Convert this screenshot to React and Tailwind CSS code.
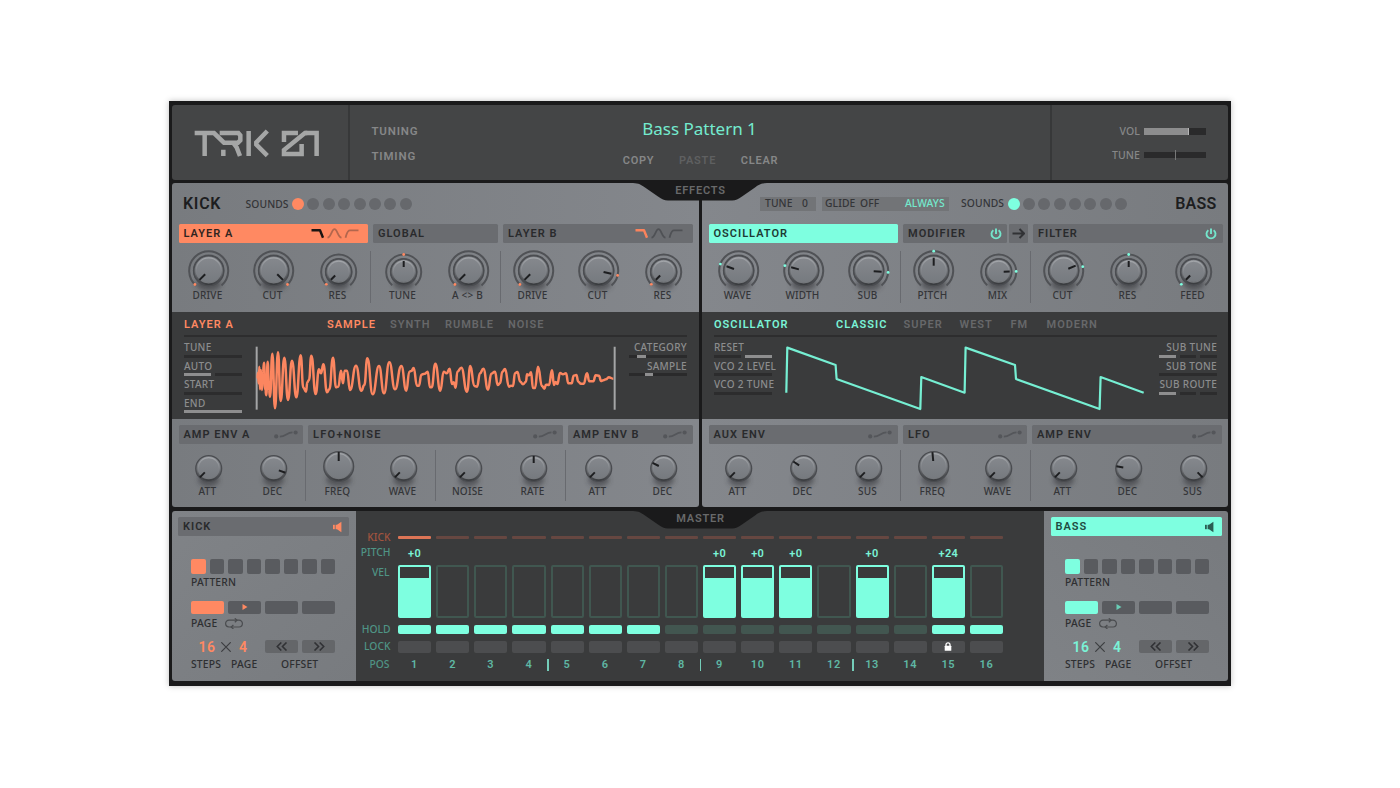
import React from "react";
import clsx from "clsx";

const DIN = "font-['Roboto',sans-serif] font-semibold";
const SANS = "font-['Noto_Sans',sans-serif] font-medium";

const KICK_TOP = [
  { label: "DRIVE", angle: -135, big: true },
  { label: "CUT", angle: 135, big: true },
  { label: "RES", angle: -135 },
  { label: "TUNE", angle: 0, line: true },
  { label: "A <> B", angle: -135, big: true },
  { label: "DRIVE", angle: -135, big: true, line: true },
  { label: "CUT", angle: 104, big: true },
  { label: "RES", angle: -135 },
];

const BASS_TOP = [
  { label: "WAVE", angle: -70, big: true },
  { label: "WIDTH", angle: -75, big: true },
  { label: "SUB", angle: 95, big: true },
  { label: "PITCH", angle: 0, big: true, line: true },
  { label: "MIX", angle: 88 },
  { label: "CUT", angle: 67, dot: 78, big: true, line: true },
  { label: "RES", angle: 0 },
  { label: "FEED", angle: -135 },
];

const KICK_BOTTOM = [
  { label: "ATT", angle: -135 },
  { label: "DEC", angle: 110 },
  { label: "FREQ", angle: 0, big: true, line: true },
  { label: "WAVE", angle: -135 },
  { label: "NOISE", angle: -135, line: true },
  { label: "RATE", angle: 0 },
  { label: "ATT", angle: -135, line: true },
  { label: "DEC", angle: -63 },
];

const BASS_BOTTOM = [
  { label: "ATT", angle: -135 },
  { label: "DEC", angle: -56 },
  { label: "SUS", angle: -135 },
  { label: "FREQ", angle: -5, big: true, line: true },
  { label: "WAVE", angle: -135 },
  { label: "ATT", angle: -135, line: true },
  { label: "DEC", angle: -80 },
  { label: "SUS", angle: 135 },
];

// sample wave form, in thirds of a pixel
const WAVE = [
  [22, 118], [24, 98], [26, 130], [28, 80], [30, 148], [33, 90], [36, 150], [39, 98], [42, 68],
  [46, 150], [49, 166], [53, 65], [57, 150], [60, 170], [67, 41], [75, 205], [84, 37], [92, 183],
  [103, 53], [114, 180], [126, 62], [139, 172], [152, 46], [160, 143], [168, 155], [172, 127],
  [177, 120], [184, 47], [197, 162], [207, 88], [213, 100], [220, 73], [231, 157], [238, 148],
  [249, 53], [258, 142], [265, 140], [273, 92], [279, 130], [284, 92], [291, 92], [300, 150],
  [318, 77], [334, 152], [343, 135], [352, 55], [368, 163], [387, 78], [402, 160], [418, 67],
  [435, 148], [454, 78], [469, 152], [478, 95], [484, 93], [491, 84], [501, 137], [507, 137],
  [514, 104], [524, 101], [533, 95], [540, 142], [545, 142], [556, 71], [571, 152], [581, 95],
  [590, 100], [599, 86], [606, 132], [611, 127], [617, 143], [622, 95], [634, 83], [651, 155],
  [661, 78], [673, 138], [681, 140], [690, 100], [700, 86], [714, 149], [724, 101], [735, 95],
  [743, 135], [750, 130], [757, 95], [765, 87], [777, 140], [783, 137], [789, 138], [795, 100],
  [802, 96], [811, 125], [819, 133], [828, 125], [831, 103], [837, 106], [843, 97], [849, 144],
  [855, 144], [864, 80], [876, 138], [883, 146], [888, 134], [897, 135], [906, 91], [912, 135],
  [917, 126], [922, 132], [930, 99], [939, 103], [948, 100], [955, 130], [965, 130], [971, 107],
  [979, 105], [985, 125], [992, 131], [1001, 131], [1011, 100], [1018, 124], [1030, 124],
  [1037, 106], [1047, 107], [1053, 123], [1060, 121], [1068, 118], [1076, 112], [1090, 116],
];

function wavePath(points) {
  let d = `M${points[0][0]} ${points[0][1]}`;
  for (let i = 1; i < points.length; i++) {
    const [x0, y0] = points[i - 1];
    const [x1, y1] = points[i];
    const mid = (x0 + x1) / 2;
    d += `C${mid} ${y0} ${mid} ${y1} ${x1} ${y1}`;
  }
  return d;
}

function polar(cx, cy, r, deg) {
  const a = ((deg - 90) * Math.PI) / 180;
  return [cx + r * Math.cos(a), cy + r * Math.sin(a)];
}

function Knob({ label, angle, dot, big, line, ring, color }) {
  const cx = 32.7;
  const cy = ring ? (big ? 27.7 : 29) : big ? 22.5 : 24.5;
  const r = big ? 15.5 : 13.5;
  const ringR = big ? 19.5 : 17.5;
  const [ax, ay] = polar(cx, cy, ringR, -139);
  const [bx, by] = polar(cx, cy, ringR, 139);
  const [px, py] = polar(cx, cy, ring ? 5 : 5.5, angle);
  const [qx, qy] = polar(cx, cy, ring ? r - 2.5 : r - 1, angle);
  const [dx, dy] = polar(cx, cy, ringR, dot ?? angle);

  return (
    <div className="relative w-[65px] shrink-0">
      {line && (
        <div
          className={clsx(
            "absolute left-[-0.5px] w-px bg-[#686a6f]",
            ring ? "top-[8px] h-[52px]" : "top-[6px] h-[51px]"
          )}
        />
      )}
      <svg width="65" height={ring ? 47 : 42} className="block overflow-visible">
        <ellipse cx={cx} cy={cy + r - 2} rx={r - 3} ry="6.5" fill="#2b2c2e" opacity="0.5" filter="url(#soft)" />
        {ring && (
          <>
            <path
              d={`M${ax} ${ay}A${ringR} ${ringR} 0 1 1 ${bx} ${by}`}
              fill="none"
              stroke="#505256"
              strokeWidth="2"
            />
            <circle cx={cx} cy={cy - 0.3} r={r + 0.3} fill="#4f5155" />
          </>
        )}
        <circle cx={cx} cy={cy} r={r - 0.6} fill="url(#rim)" stroke="#4a4c50" strokeWidth="1.4" />
        <circle cx={cx} cy={cy - 0.4} r={r - 3} fill="url(#face)" stroke="url(#edge)" strokeWidth="1.2" />
        <line x1={px} y1={py} x2={qx} y2={qy} stroke="#1d1e20" strokeWidth="2" />
        {ring && <circle cx={dx} cy={dy} r="1.4" fill={color} />}
      </svg>
      <div
        className={clsx(
          SANS,
          "-mt-px -ml-px text-center text-[10px] leading-[12px] tracking-[0.2px] text-[#343538]"
        )}
      >
        {label}
      </div>
    </div>
  );
}

function FilterIcons({ first, rest }) {
  return (
    <svg width="48" height="11" viewBox="0 0 48 11" fill="none" strokeWidth="1.8" strokeLinejoin="round">
      <path d="M0.5 2.3H9L12 9.8" stroke={first} strokeWidth="2.4" />
      <path d="M16.5 9.7C20 9.3 20.7 1.2 23.5 1.2S27 9.3 30.5 9.7" stroke={rest} />
      <path d="M34.5 9.8C35.8 6 36 2.3 39 2.3H47.5" stroke={rest} />
    </svg>
  );
}

function EnvIcon() {
  return (
    <svg width="24" height="9" viewBox="0 0 24 9" fill="none">
      <circle cx="2.2" cy="6.4" r="2.1" fill="#54565a" />
      <path d="M5.8 6.6C12 6.6 12.5 2.6 18.5 2.4" stroke="#54565a" strokeWidth="1.7" />
      <circle cx="21.6" cy="2.5" r="2.1" fill="#54565a" />
    </svg>
  );
}

function PowerIcon() {
  return (
    <svg width="12" height="12" viewBox="0 0 12 12" fill="none" stroke="#74e6cc" strokeWidth="1.9">
      <path d="M3.4 2.2A4.5 4.5 0 1 0 8.6 2.2" />
      <path d="M6 0.6V6" />
    </svg>
  );
}

function Tab({ children, className, icon }) {
  return (
    <div className={clsx("flex h-[19px] shrink-0 items-center justify-between rounded-[1.5px] pl-[5px]", className)}>
      <span className={clsx(DIN, "text-[11px] leading-none tracking-[1px]")}>{children}</span>
      {icon}
    </div>
  );
}

const IDLE = "bg-[#6a6c70] text-[#292a2c]";

function Dots({ color }) {
  return (
    <div className="flex gap-[3.4px]">
      {Array.from({ length: 8 }, (_, i) => (
        <span key={i} className={clsx("size-3 rounded-full", i === 0 ? color : "bg-[#66686c]")} />
      ))}
    </div>
  );
}

// segs is a list of lit flags, or a slider offset
function Param({ label, segs, right }) {
  return (
    <div className="h-[18.6px] w-[58px]">
      <div
        className={clsx(
          SANS,
          "flex h-[13px] items-center pb-[2px] whitespace-nowrap text-[10px] leading-none tracking-[0.3px] text-[#8c8d8e]",
          right && "justify-end"
        )}
      >
        {label}
      </div>
      {segs.slider !== undefined ? (
        <div className="h-[3px] bg-[#2a2a2b]">
          <div className="h-full w-[8.5px] bg-[#8e8e8f]" style={{ marginLeft: segs.slider }} />
        </div>
      ) : (
        <div className="flex gap-1">
          {segs.map((lit, i) => (
            <div key={i} className={clsx("h-[3px] flex-1", lit ? "bg-[#8e8e8f]" : "bg-[#2c2c2d]")} />
          ))}
        </div>
      )}
    </div>
  );
}

function ModeRow({ title, titleWidth, modes, color }) {
  return (
    <div className={clsx(DIN, "flex h-[25px] items-center border-b-2 border-[#2d2d2e] pt-px text-[11px] leading-none tracking-[1px]")}>
      <span className={clsx(titleWidth, color)}>{title}</span>
      {modes.map(([name, width], i) => (
        <span key={name} className={clsx(i === 0 ? color : "text-[#67686a]")} style={{ width }}>
          {name}
        </span>
      ))}
    </div>
  );
}

function Synth({ children, className }) {
  return <section className={clsx("flex h-[324px] flex-col overflow-hidden rounded-[3px]", className)}>{children}</section>;
}

function KnobRow({ knobs, ring, color }) {
  return (
    <div className={clsx("flex pl-[3.5px]", ring ? "h-[69px]" : "h-[63px]")}>
      {knobs.map((k, i) => (
        <Knob key={i} {...k} ring={ring} color={color} />
      ))}
    </div>
  );
}

function KickSynth() {
  return (
    <Synth className="w-[527px] bg-linear-to-r from-[#787b7f] to-[#84878c]">
      <div className="flex h-[41px] items-center pl-[11px]">
        <span className={clsx(DIN, "w-[62.5px] pt-px text-[16px] leading-none tracking-[0.7px] text-[#1d1e20]")}>KICK</span>
        <span className={clsx(SANS, "w-[46.5px] pt-px text-[10.3px] leading-none tracking-[0.1px] text-[#343538]")}>SOUNDS</span>
        <Dots color="bg-[#ff8962]" />
      </div>
      <div className="flex gap-[5px] pl-[6.5px]">
        <Tab className="w-[189.5px] bg-[#ff8962] pr-[9px] text-[#31241f]" icon={<FilterIcons first="#1b1512" rest="#b3664d" />}>
          LAYER A
        </Tab>
        <Tab className={clsx(IDLE, "w-[125px]")}>GLOBAL</Tab>
        <Tab className={clsx(IDLE, "w-[189.5px] pr-[10px]")} icon={<FilterIcons first="#fb835c" rest="#4f5155" />}>
          LAYER B
        </Tab>
      </div>
      <KnobRow knobs={KICK_TOP} ring color="#ff8962" />
      <div className="h-[107px] bg-[#3a3b3c] pl-3">
        <div className="w-[503px]">
          <ModeRow
            title="LAYER A"
            titleWidth="w-[143px]"
            color="text-[#ff8962]"
            modes={[["SAMPLE", 63], ["SYNTH", 55], ["RUMBLE", 63], ["NOISE", 50]]}
          />
          <div className="flex justify-between pt-1">
            <div className="w-[58px] pt-[0.5px]">
              <Param label="TUNE" segs={[0]} />
              <Param label="AUTO" segs={[1, 0]} />
              <Param label="START" segs={[0]} />
              <Param label="END" segs={[1]} />
            </div>
            <svg width="361" height="75" viewBox="15 0 1083 225" className="-mt-px mr-[1px]">
              <path d="M20 20V209" stroke="#a4a5a6" strokeWidth="6" />
              <path d={wavePath(WAVE)} fill="none" stroke="#fc8660" strokeWidth="7.5" strokeLinejoin="round" />
              <path d="M1094 20V209" stroke="#a4a5a6" strokeWidth="6" />
            </svg>
            <div className="w-[58px] pt-[0.5px]">
              <Param label="CATEGORY" segs={{ slider: 8 }} right />
              <Param label="SAMPLE" segs={{ slider: 15.5 }} right />
            </div>
          </div>
        </div>
      </div>
      <div className="flex gap-[5px] pt-[6px] pl-[6.5px]">
        <Tab className={clsx(IDLE, "w-[124.5px] pr-[5.5px]")} icon={<EnvIcon />}>AMP ENV A</Tab>
        <Tab className={clsx(IDLE, "w-[255px] pr-[6px]")} icon={<EnvIcon />}>
          <span className="tracking-[1.3px]">LFO+NOISE</span>
        </Tab>
        <Tab className={clsx(IDLE, "w-[124.5px] pr-[6px]")} icon={<EnvIcon />}>AMP ENV B</Tab>
      </div>
      <KnobRow knobs={KICK_BOTTOM} />
    </Synth>
  );
}

function BassSynth() {
  return (
    <Synth className="w-[526px] bg-linear-to-l from-[#787b7f] to-[#84878c]">
      <div className={clsx(SANS, "flex h-[41px] items-center pl-[58px] text-[10.3px] leading-none tracking-[0.1px] text-[#343538]")}>
        <div className="flex h-[14px] w-[56px] items-center justify-between bg-[#727477] px-[5px] pr-2">
          <span>TUNE</span>
          <span>0</span>
        </div>
        <div className="ml-[6px] flex h-[14px] w-[127px] items-center bg-[#727477] pl-[3px]">
          <span className="w-[35px] shrink-0">GLIDE</span>
          <span className="w-[45px] shrink-0">OFF</span>
          <span className="text-[#74e8cd]">ALWAYS</span>
        </div>
        <span className="ml-3 w-[46.5px]">SOUNDS</span>
        <Dots color="bg-[#7effe0]" />
        <span className={clsx(DIN, "ml-[48px] pt-px text-[16px] tracking-[0.2px] text-[#1d1e20]")}>BASS</span>
      </div>
      <div className="flex pl-[6.5px]">
        <Tab className="mr-[5px] w-[189.5px] bg-[#7effe0] text-[#1d3a34]">OSCILLATOR</Tab>
        <Tab className={clsx(IDLE, "mr-[2px] w-[104px] pr-[5px]")} icon={<PowerIcon />}>MODIFIER</Tab>
        <div className={clsx(IDLE, "mr-[5px] grid w-[19px] place-items-center rounded-[1px]")}>
          <svg width="13" height="11" viewBox="0 0 13 11" fill="none" stroke="#313235" strokeWidth="2">
            <path d="M0.5 5.5H11.5M7.5 1L12 5.5L7.5 10" />
          </svg>
        </div>
        <Tab className={clsx(IDLE, "w-[189.5px] pr-[5.5px]")} icon={<PowerIcon />}>FILTER</Tab>
      </div>
      <KnobRow knobs={BASS_TOP} ring color="#7effe0" />
      <div className="h-[107px] bg-[#3a3b3c] pl-3">
        <div className="w-[503px]">
          <ModeRow
            title="OSCILLATOR"
            titleWidth="w-[122px]"
            color="text-[#7af3d7]"
            modes={[["CLASSIC", 67.5], ["SUPER", 56], ["WEST", 51], ["FM", 36], ["MODERN", 60]]}
          />
          <div className="flex pt-1">
            <div className="w-[58px] pt-[0.5px]">
              <Param label="RESET" segs={[0, 1]} />
              <Param label="VCO 2 LEVEL" segs={[0]} />
              <Param label="VCO 2 TUNE" segs={[0]} />
            </div>
            <svg width="387" height="75" viewBox="772 341 387 75" fill="none" className="block">
              <path
                d="M786.3 392.7L787.3 347.6L835.6 365L836.6 379L920.3 409L921.3 377L964.6 392.7L965.6 347.6L1015 365L1016 379L1099.6 409L1100.6 377L1143.7 392.7"
                stroke="#76efd3"
                strokeWidth="2.2"
                strokeLinejoin="round"
              />
            </svg>
            <div className="w-[58px] pt-[0.5px]">
              <Param label="SUB TUNE" segs={[1, 0, 0]} right />
              <Param label="SUB TONE" segs={[0]} right />
              <Param label="SUB ROUTE" segs={[1, 0, 0]} right />
            </div>
          </div>
        </div>
      </div>
      <div className="flex gap-[5px] pt-[6px] pl-[6.5px]">
        <Tab className={clsx(IDLE, "w-[189.5px] pr-[6px]")} icon={<EnvIcon />}>AUX ENV</Tab>
        <Tab className={clsx(IDLE, "w-[124px] pr-[5px]")} icon={<EnvIcon />}>LFO</Tab>
        <Tab className={clsx(IDLE, "w-[189.5px] pr-[6px]")} icon={<EnvIcon />}>AMP ENV</Tab>
      </div>
      <KnobRow knobs={BASS_BOTTOM} />
    </Synth>
  );
}

function Logo() {
  return (
    <svg width="128.3" height="31.7" viewBox="85 100 385 95" fill="none" stroke="#a5a6a6" strokeWidth="13.5">
      <path d="M90 115H148L178 144H220L227 137V122L221 115H165" />
      <path d="M120 114V184M176 165V184M207 146L216 158L226 184" />
      <path d="M252 109V184M308 109L275 143V150L308 183" />
      <path d="M400 115H358V142M428 115H421L358 166V178H411V148" />
      <path d="M422 115H456V184" />
    </svg>
  );
}

function Header() {
  return (
    <header className={clsx(DIN, "flex h-[75px] rounded-[3px] bg-[#444546] text-[11.5px] leading-none tracking-[0.8px] text-[#868788]")}>
      <div className="w-[178px] border-r-2 border-[#373839] pt-[23px] pl-[21px]">
        <Logo />
      </div>
      <div className="w-[250px] pt-[21px] pl-[21.5px]">
        <div className="h-[25px]">TUNING</div>
        <div>TIMING</div>
      </div>
      <div className="w-[199px] text-center">
        <div className="pt-[14px] font-['Noto_Sans',sans-serif] text-[17px] leading-[20px] font-normal tracking-normal text-[#74ebcf]">
          Bass Pattern 1
        </div>
        <div className="flex justify-center gap-[24.5px] pt-[16px] pl-[2px] text-[11px]">
          <span>COPY</span>
          <span className="text-[#5f6061]">PASTE</span>
          <span>CLEAR</span>
        </div>
      </div>
      <div className="ml-auto w-[178px] border-l-2 border-[#373839] pt-[21px] pl-[55px]">
        <div className={clsx(SANS, "flex items-center text-[10.5px] tracking-[0.1px]")}>
          <span className="w-[33px] text-right">VOL</span>
          <div className="ml-[4px] h-[7px] w-[62px] bg-[#2a2a2b]">
            <div className="h-full w-[45px] border-r border-[#b5b5b6] bg-[#8d8d8e]" />
          </div>
        </div>
        <div className={clsx(SANS, "flex items-center pt-[13px] text-[10.5px] tracking-[0.1px]")}>
          <span className="w-[33px] text-right">TUNE</span>
          <div className="ml-[4px] flex h-[6px] w-[62px] items-center justify-center bg-[#2a2a2b]">
            <div className="h-[10px] w-px shrink-0 bg-[#777878]" />
          </div>
        </div>
      </div>
    </header>
  );
}

// dark tab that hangs over the panel below it
function Notch({ children, className }) {
  return (
    <div className={clsx("absolute left-[464px] w-[134px]", className)}>
      <svg width="134" height="20" viewBox="0 0 134 20" className="block">
        <path d="M0 0V2C6 2.4 8 3.6 12 6.5L25 15.5C29 18.4 31 19.5 35 19.5H99C103 19.5 105 18.4 109 15.5L122 6.5C126 3.6 128 2.4 134 2V0Z" fill="#1a1a1b" />
      </svg>
      <span className={clsx(DIN, "absolute inset-x-0 top-[4px] pl-px text-center text-[11px] leading-none tracking-[0.8px] text-[#68696a]")}>
        {children}
      </span>
    </div>
  );
}

function Speaker({ color }) {
  return (
    <svg width="9" height="12" viewBox="0 0 9 12" fill={color}>
      <rect x="0" y="3.8" width="1.8" height="4.4" />
      <path d="M2.6 3.8H4L8.4 0.8V11.2L4 8.2H2.6Z" />
    </svg>
  );
}

function Chevrons({ flip }) {
  return (
    <div className="grid h-[12.5px] flex-1 place-items-center rounded-[2px] bg-[#646669]">
      <svg width="12" height="9" viewBox="0 0 12 9" fill="none" stroke="#313235" strokeWidth="1.6" className={clsx(flip && "-scale-x-100")}>
        <path d="M5.3 0.5L1.3 4.5L5.3 8.5M10.5 0.5L6.5 4.5L10.5 8.5" />
      </svg>
    </div>
  );
}

function Sequencer({ name, kick, className }) {
  const fill = kick ? "bg-[#ff8962]" : "bg-[#7effe0]";
  const ink = kick ? "#ff8962" : "#69cdb6";
  return (
    <aside className={clsx("h-[170px] w-[184px] rounded-[3px] pt-[6px]", className)}>
      <Tab
        className={clsx("w-[171px]", kick ? clsx(IDLE, "ml-[6px] pr-[7.5px]") : "ml-[6.5px] bg-[#7effe0] pr-[7.5px] text-[#1f4a41]")}
        icon={<Speaker color={kick ? "#ff8962" : "#2a5d52"} />}
      >
        {name}
      </Tab>
      <div className={clsx(SANS, "w-[144px] pt-[23px] text-[10.3px] leading-none tracking-[0.2px] text-[#2e2f31]", kick ? "ml-[19px]" : "ml-[21px]")}>
        <div className="flex gap-1">
          {Array.from({ length: 8 }, (_, i) => (
            <span key={i} className={clsx("h-[14.5px] flex-1 rounded-[2px]", i === 0 ? fill : "bg-[#595b5f]")} />
          ))}
        </div>
        <div className="flex h-[27.5px] pt-[3px]">PATTERN</div>
        <div className="flex gap-1">
          {[0, 1, 2, 3].map((i) => (
            <span key={i} className={clsx("grid h-[12.5px] flex-1 place-items-center rounded-[2px]", i === 0 ? fill : "bg-[#595b5f]")}>
              {i === 1 && (
                <svg width="6" height="6" viewBox="0 0 6 6" fill={ink}>
                  <path d="M0.5 0L5.5 3L0.5 6Z" />
                </svg>
              )}
            </span>
          ))}
        </div>
        <div className="flex h-[26.5px] gap-[8px] pt-[4px]">
          <span>PAGE</span>
          <svg width="18" height="11" viewBox="0 0 18 11" fill="none" stroke="#4a4c4f" strokeWidth="1.2">
            <path d="M8 9H4A3.4 3.4 0 0 1 4 2.2H12M10 2.2H14A3.4 3.4 0 0 1 14 9H6.5" />
            <path d="M9.8 0.3L12 2.2L9.8 4.2M8.4 7L6.2 9L8.4 11" />
          </svg>
        </div>
        <div className="flex h-[12.5px] items-center">
          <div className={clsx(DIN, "flex w-[74px] items-center pt-px text-[14px] tracking-[0.5px]", kick ? "text-[#ff8962]" : "text-[#7af3d7]")}>
            <span className="w-[30px] pl-[7.5px]">16</span>
            <svg width="10" height="10" viewBox="0 0 10 10" stroke="#3d3e41" strokeWidth="1.2">
              <path d="M0.3 0.3L9.7 9.7M9.7 0.3L0.3 9.7" />
            </svg>
            <span className="pl-[8px]">4</span>
          </div>
          <div className="flex w-[70px] gap-1">
            <Chevrons />
            <Chevrons flip />
          </div>
        </div>
        <div className="flex pt-[6.5px]">
          <span className="w-[40px]">STEPS</span>
          <span className="w-[50px]">PAGE</span>
          <span>OFFSET</span>
        </div>
      </div>
    </aside>
  );
}

const PITCH = { 1: "+0", 9: "+0", 10: "+0", 11: "+0", 13: "+0", 15: "+24" };
const HOLD = [1, 2, 3, 4, 5, 6, 7, 15, 16];

function Step({ n }) {
  const on = PITCH[n];
  return (
    <div className="relative flex-1">
      <div className={clsx("h-[3px] rounded-[1px]", n === 1 ? "bg-[#dd7556]" : "bg-[#664741]")} />
      <div className={clsx(DIN, "h-[26px] pt-[9px] text-center text-[11px] leading-none tracking-[0.3px] text-[#7af3d7]")}>{on}</div>
      <div className={clsx("h-[53px] rounded-[2px] border-2", on ? "border-[#7effe0]" : "border-[#405750]")}>
        {on && <div className="mt-[10.5px] h-[38.5px] bg-[#7effe0]" />}
      </div>
      <div className={clsx("mt-[7px] h-[8.5px] rounded-[2px]", HOLD.includes(n) ? "bg-[#7effe0]" : "bg-[#425650]")} />
      <div className="mt-[7px] grid h-[12.5px] place-items-center rounded-[2px] bg-[#4c4d4f]">
        {n === 15 && (
          <svg width="8" height="9" viewBox="0 0 8 9">
            <path d="M2 4.5V2.8A2 2 0 0 1 6 2.8V4.5" fill="none" stroke="#fff" strokeWidth="1.3" />
            <rect x="0.7" y="3.8" width="6.6" height="4.9" rx="0.5" fill="#fff" />
          </svg>
        )}
      </div>
      <div className={clsx(DIN, "pt-[6px] text-center text-[11px] leading-none tracking-[0.6px] text-[#5fb7a4]")}>{n}</div>
      {n % 4 === 1 && n > 1 && <div className="absolute bottom-[-0.5px] left-[-3.5px] h-[12px] w-[1.5px] bg-[#74cdb9]" />}
    </div>
  );
}

function Grid() {
  return (
    <main className="flex w-[688px] bg-[#3a3b3c]">
      <div className={clsx(SANS, "w-[34.5px] pt-[21px] text-right text-[10.3px] leading-none text-[#4f9485]")}>
        <div className="h-[15px] text-[#a2543f]">KICK</div>
        <div className="h-[20px]">PITCH</div>
        <div className="h-[56.5px] pr-px">VEL</div>
        <div className="h-[17.5px]">HOLD</div>
        <div className="h-[18px]">LOCK</div>
        <div className="pr-px">POS</div>
      </div>
      <div className="ml-[7.5px] flex w-[605px] gap-[5px] self-start pt-[25px]">
        {Array.from({ length: 16 }, (_, i) => (
          <Step key={i} n={i + 1} />
        ))}
      </div>
    </main>
  );
}

export default function App() {
  return (
    <div className="flex h-[788px] justify-center bg-white pt-[101px]">
      <svg width="0" height="0" className="absolute">
        <defs>
          <filter id="soft" x="-50%" y="-50%" width="200%" height="220%">
            <feGaussianBlur stdDeviation="2.5" />
          </filter>
          <linearGradient id="rim" x1="0" y1="0" x2="0" y2="1">
            <stop offset="0" stopColor="#85888d" />
            <stop offset="0.55" stopColor="#6f7276" />
            <stop offset="1" stopColor="#343639" />
          </linearGradient>
          <linearGradient id="face" x1="0" y1="0" x2="0" y2="1">
            <stop offset="0" stopColor="#85888d" />
            <stop offset="1" stopColor="#767a7f" />
          </linearGradient>
          <linearGradient id="edge" x1="0" y1="0" x2="0" y2="1">
            <stop offset="0" stopColor="#a3a6aa" />
            <stop offset="0.6" stopColor="#7d8085" />
            <stop offset="1" stopColor="#75787c" />
          </linearGradient>
        </defs>
      </svg>
      <div className="relative h-[585px] w-[1062px] bg-[#1a1a1b] px-[3px] pt-[4px] shadow-[0_0_6px_rgba(0,0,0,0.25)]">
        <Header />
        <div className="flex justify-between pt-[3px]">
          <KickSynth />
          <BassSynth />
        </div>
        <div className="flex pt-[4px]">
          <Sequencer name="KICK" kick className="rounded-r-none bg-linear-to-br from-[#808387] to-[#787b7f]" />
          <Grid />
          <Sequencer name="BASS" className="rounded-l-none bg-linear-to-bl from-[#777a7e] to-[#7f8286]" />
        </div>
        <Notch className="top-[79.5px]">EFFECTS</Notch>
        <Notch className="top-[407.5px]">MASTER</Notch>
      </div>
    </div>
  );
}
